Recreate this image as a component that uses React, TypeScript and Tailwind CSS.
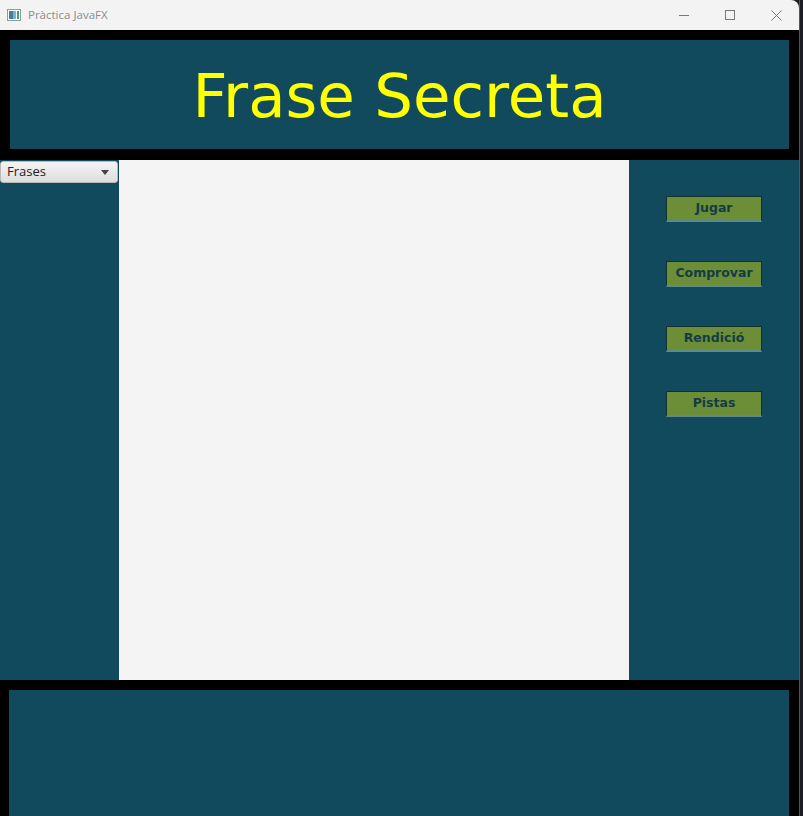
import React from "react";

const buttons = ["Jugar", "Comprovar", "Rendició", "Pistas"];

function TitleBar() {
  return (
    <div className="flex h-[30px] w-[799px] items-center rounded-tr-[8px] bg-[#f3f3f3] pl-[7px]">
      <svg width="14" height="12" viewBox="0 0 14 12">
        <rect x="0.5" y="0.5" width="13" height="11" fill="#fff" stroke="#8a9aa6" />
        <rect x="2" y="2" width="4" height="8" fill="#3c7fa0" />
        <rect x="6" y="2" width="3" height="8" fill="#7fb0c8" />
        <rect x="10" y="2" width="2" height="8" fill="#4a9a6a" />
      </svg>
      <span className="ml-[7px] text-[11.5px] text-[#8c8c8c] [font-family:'Open_Sans',sans-serif]">
        Pràctica JavaFX
      </span>
      <div className="ml-auto flex h-full items-center">
        <div className="flex h-full w-[46px] items-center justify-center">
          <div className="h-px w-[10px] bg-[#777]" />
        </div>
        <div className="flex h-full w-[46px] items-center justify-center">
          <div className="h-[10px] w-[10px] border border-[#777]" />
        </div>
        <div className="flex h-full w-[46px] items-center justify-center">
          <svg width="11" height="11" viewBox="0 0 11 11">
            <path d="M0.5 0.5L10.5 10.5M10.5 0.5L0.5 10.5" stroke="#777" strokeWidth="1" />
          </svg>
        </div>
      </div>
    </div>
  );
}

export default function App() {
  return (
    <div className="flex h-[816px] w-[803px] overflow-hidden bg-[#1c1c24]">
      <div className="flex w-[799px] flex-col">
        <TitleBar />
        <div className="flex h-[130px] w-[799px] bg-black px-[10px] pt-[10px] pb-[11px]">
          <div className="flex flex-1 items-center justify-center bg-[#114a5c]">
            <span className="pt-[2px] text-[61px] leading-none text-[#ffff00] [font-family:'DejaVu_Sans',sans-serif]">
              Frase Secreta
            </span>
          </div>
        </div>
        <div className="flex h-[520px]">
          <div className="w-[119px] bg-[#114a5c]">
            <div className="mt-px flex h-[22px] w-[118px] items-center justify-between rounded-[3px] border border-[#b8b8b8] bg-gradient-to-b from-[#f4f4f4] to-[#dedede] pl-[6px] pr-[8px]">
              <span className="text-[13px] text-[#222] [font-family:'Open_Sans',sans-serif]">Frases</span>
              <svg width="8" height="5" viewBox="0 0 8 5">
                <path d="M0 0H8L4 5Z" fill="#444" />
              </svg>
            </div>
          </div>
          <div className="w-[510px] bg-[#f4f4f4]" />
          <div className="flex flex-1 flex-col items-start gap-[39px] bg-[#114a5c] pl-[37px] pt-[36px]">
            {buttons.map((b) => (
              <div
                key={b}
                className="flex h-[26px] w-[96px] items-center justify-center border border-[#14302a] border-b-[2px] border-b-[#5f8a8a] bg-[#6b8e37] text-[12.5px] font-bold text-[#143c48] [font-family:'DejaVu_Sans',sans-serif]"
              >
                {b}
              </div>
            ))}
          </div>
        </div>
        <div className="flex flex-1 bg-black pl-[9px] pr-[10px] pt-[10px]">
          <div className="flex-1 bg-[#114a5c]" />
        </div>
      </div>
      <div className="w-px bg-[#555]" />
    </div>
  );
}
